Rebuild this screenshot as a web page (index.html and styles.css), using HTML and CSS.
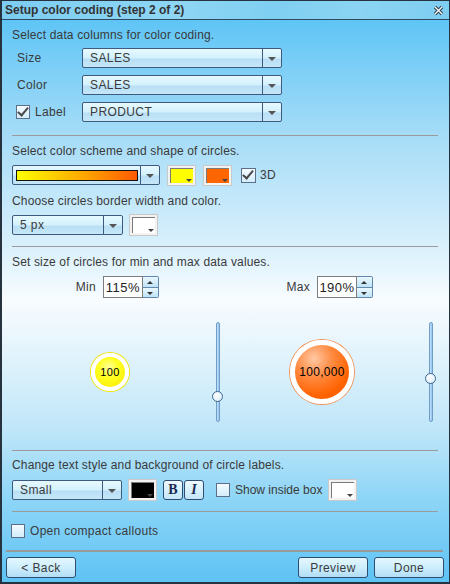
FILE: index.html
```html
<!DOCTYPE html>
<html lang="en">
<head>
    <meta charset="UTF-8">
    <title>Setup color coding</title>
    <link rel="stylesheet" href="styles.css">
</head>
<body>
    <div class="dialog">
        <div class="titlebar">
            <span class="title">Setup color coding (step 2 of 2)</span>
            <svg class="close" width="11" height="11" viewBox="0 0 11 11">
                <path d="M2 2 L9 9 M9 2 L2 9" stroke="#2a3a4a" stroke-width="3.2"/>
                <path d="M2 2 L9 9 M9 2 L2 9" stroke="#fff" stroke-width="1.4"/>
            </svg>
        </div>

        <div class="content">
            <!-- data columns -->
            <p class="caption first">Select data columns for color coding.</p>
            <div class="field-row">
                <span class="field-label">Size</span>
                <div class="combo w200"><span class="combo-text">SALES</span><span class="combo-arrow"></span></div>
            </div>
            <div class="field-row">
                <span class="field-label">Color</span>
                <div class="combo w200"><span class="combo-text">SALES</span><span class="combo-arrow"></span></div>
            </div>
            <div class="field-row">
                <span class="field-label check-label"><span class="check on"></span>Label</span>
                <div class="combo w200"><span class="combo-text">PRODUCT</span><span class="combo-arrow"></span></div>
            </div>
            <div class="sep s1"></div>

            <!-- scheme -->
            <p class="caption c2">Select color scheme and shape of circles.</p>
            <div class="tool-row r2">
                <div class="combo w148"><span class="combo-text"><span class="gradient-bar"></span></span><span class="combo-arrow"></span></div>
                <div class="swatch"><span class="swatch-fill yellow"></span></div>
                <div class="swatch"><span class="swatch-fill orange"></span></div>
                <span class="check-label three-d"><span class="check on"></span>3D</span>
            </div>
            <p class="caption c3">Choose circles border width and color.</p>
            <div class="tool-row r3">
                <div class="combo w111"><span class="combo-text">5 px</span><span class="combo-arrow"></span></div>
                <div class="swatch big"><span class="swatch-fill white"></span></div>
            </div>
            <div class="sep s2"></div>

            <!-- sizes -->
            <p class="caption c4">Set size of circles for min and max data values.</p>
            <div class="spin-row">
                <div class="spin-group g1">
                    <span>Min</span>
                    <div class="spinner"><span class="spin-value">115%</span><span class="spin-btns"><span class="up"></span><span class="down"></span></span></div>
                </div>
                <div class="spin-group g2">
                    <span>Max</span>
                    <div class="spinner"><span class="spin-value">190%</span><span class="spin-btns"><span class="up"></span><span class="down"></span></span></div>
                </div>
            </div>
            <div class="preview">
                <div class="bubble-cell left">
                    <div class="bubble small"><span>100</span></div>
                </div>
                <div class="slider"><span class="thumb" style="top: 68px"></span></div>
                <div class="bubble-cell right">
                    <div class="bubble large"><span>100,000</span></div>
                </div>
                <div class="slider last"><span class="thumb" style="top: 50px"></span></div>
            </div>
            <div class="sep s3"></div>

            <!-- labels -->
            <p class="caption c5">Change text style and background of circle labels.</p>
            <div class="tool-row r5">
                <div class="combo w110"><span class="combo-text">Small</span><span class="combo-arrow"></span></div>
                <div class="swatch big"><span class="swatch-fill black"></span></div>
                <div class="style-btns">
                    <span class="style-btn bold">B</span>
                    <span class="style-btn italic">I</span>
                </div>
                <span class="check-label inside"><span class="check"></span>Show inside box</span>
                <div class="swatch big"><span class="swatch-fill white"></span></div>
            </div>
            <div class="sep s4"></div>

            <span class="check-label callouts"><span class="check"></span>Open compact callouts</span>
            <div class="rule"></div>

            <div class="footer">
                <button class="btn back">&lt; Back</button>
                <button class="btn">Preview</button>
                <button class="btn">Done</button>
            </div>
        </div>
    </div>
</body>
</html>
```

FILE: styles.css
```css
body {
    margin: 0;
    font-family: "Liberation Sans", Arial, sans-serif;
    font-size: 12px;
    color: #3a3a3a;
}

p {
    margin: 0;
}

.dialog {
    width: 450px;
    height: 584px;
    box-sizing: border-box;
    border: 1px solid #26323e;
    border-left-width: 2px;
    border-bottom-width: 2px;
    display: flex;
    flex-direction: column;
}

.titlebar {
    height: 18px;
    border-bottom: 1px solid #2c4a62;
    background: linear-gradient(100deg, #7ccdf1 0%, #8ed6f4 40%, #7fcff2 60%, #8bd4f3 80%, #7dcdf1 100%);
    display: flex;
    align-items: center;
    padding: 0 5px 0 3px;
}

.title {
    font-weight: bold;
    color: #333;
    flex: 1;
}

.close {
    display: block;
}

.content {
    flex: 1;
    display: flex;
    flex-direction: column;
    padding: 0 10px;
    background: linear-gradient(to bottom, #5fc5f6 0px, #a3dbf7 110px, #dbf1fc 230px, #f8fcff 280px, #e4f4fc 330px, #bfe6f9 410px, #8dd5f7 480px, #5ec3f4 562px);
}

.caption {
    line-height: 14px;
    height: 14px;
    letter-spacing: 0.15px;
}

.caption.first { margin-top: 8px; margin-bottom: 6px; }
.caption.c2 { margin-top: 8px; }
.caption.c3 { margin-top: 9px; }
.caption.c4 { margin-top: 8px; }
.caption.c5 { margin-top: 7px; }

.field-row {
    display: flex;
    align-items: center;
    height: 20px;
    padding-left: 4px;
    margin-bottom: 7px;
}

.field-label {
    width: 66px;
    padding-left: 1px;
    box-sizing: border-box;
    letter-spacing: 0.3px;
}

.field-label.check-label {
    padding-left: 0;
}

.check-label {
    display: flex;
    align-items: center;
    gap: 5px;
    letter-spacing: 0.3px;
}

.check {
    width: 12px;
    height: 12px;
    border: 1px solid #5b6f88;
    background: linear-gradient(#f4fbff, #d3ecfa);
    position: relative;
    flex: none;
}

.check.on::after {
    content: "";
    position: absolute;
    left: 3px;
    top: -1px;
    width: 4px;
    height: 9px;
    border: solid #4a4a4a;
    border-width: 0 2px 2px 0;
    transform: rotate(40deg);
}

.combo {
    height: 20px;
    box-sizing: border-box;
    border: 1px solid #3e5a7e;
    border-radius: 2px;
    background: linear-gradient(#e6f9ff 0%, #d3f1fd 50%, #b9dff5 55%, #c5e7f8 100%);
    display: flex;
}

.w200 { width: 200px; }
.w148 { width: 148px; }
.w111 { width: 111px; }
.w110 { width: 110px; }

.combo-text {
    flex: 1;
    display: flex;
    align-items: center;
    padding-left: 7px;
    letter-spacing: 0.4px;
}

.combo-arrow {
    width: 18px;
    border-left: 1px solid #3e5a7e;
    position: relative;
}

.combo-arrow::after {
    content: "";
    position: absolute;
    left: 5px;
    top: 8px;
    border-left: 4px solid transparent;
    border-right: 4px solid transparent;
    border-top: 4px solid #555;
}

.gradient-bar {
    width: 120px;
    height: 9px;
    border: 1px solid #111;
    background: linear-gradient(to right, #ffff00, #ffa800 55%, #ff5a00);
    margin-left: -4px;
}

.tool-row {
    display: flex;
    align-items: center;
}

.tool-row.r2 { margin-top: 7px; gap: 7px; height: 20px; }
.tool-row.r3 { margin-top: 7px; gap: 6px; height: 20px; }
.tool-row.r5 { margin-top: 7px; height: 22px; }

.swatch {
    width: 29px;
    height: 21px;
    box-sizing: border-box;
    border: 1px solid #c9c9c9;
    background: #f2f2f2;
    padding: 2px;
    display: flex;
    position: relative;
}

.swatch.big {
    height: 22px;
}

.swatch::after {
    content: "";
    position: absolute;
    right: 3px;
    bottom: 3px;
    border-left: 3px solid transparent;
    border-right: 3px solid transparent;
    border-top: 3px solid #444;
}

.swatch-fill {
    flex: 1;
    border-top: 1px solid #7a7a7a;
    border-left: 1px solid #7a7a7a;
}

.swatch-fill.yellow { background: #ffff00; }
.swatch-fill.orange { background: #ff6600; }
.swatch-fill.white { background: #fff; }
.swatch-fill.black { background: #000; }

.three-d {
    margin-left: 2px;
    gap: 4px;
}

.three-d .check {
    width: 13px;
    height: 13px;
}

.sep {
    height: 1px;
    background: #9b9b9b;
    margin-right: 1px;
}

.sep.s1 { margin-top: 6px; }
.sep.s2 { margin-top: 11px; }
.sep.s3 { margin-top: 4px; }
.sep.s4 { margin-top: 10px; }

.spin-row {
    display: flex;
    margin-top: 7px;
    height: 22px;
}

.spin-group {
    display: flex;
    align-items: center;
    justify-content: flex-end;
    gap: 7px;
    letter-spacing: 0.3px;
}

.spin-group.g1 { width: 147px; }
.spin-group.g2 { width: 214px; }

.spinner {
    display: flex;
    height: 22px;
}

.spin-value {
    width: 40px;
    box-sizing: border-box;
    border: 1px solid #7d7d7d;
    background: #fff;
    color: #222;
    font-size: 13px;
    display: flex;
    align-items: center;
    justify-content: center;
    letter-spacing: 0.5px;
}

.spin-btns {
    width: 16px;
    display: flex;
    flex-direction: column;
    border: 1px solid #6388ad;
    border-left: none;
    box-sizing: border-box;
    border-radius: 0 2px 2px 0;
}

.spin-btns span {
    flex: 1;
    position: relative;
    background: linear-gradient(#eaf8ff, #bfe3f7);
}

.spin-btns .up {
    border-bottom: 1px solid #6388ad;
}

.spin-btns span::after {
    content: "";
    position: absolute;
    left: 4px;
    top: 4px;
    border-left: 3px solid transparent;
    border-right: 3px solid transparent;
}

.spin-btns .up::after {
    border-bottom: 3px solid #333;
}

.spin-btns .down::after {
    border-top: 3px solid #333;
}

.preview {
    height: 148px;
    display: flex;
    align-items: center;
}

.bubble-cell {
    display: flex;
    justify-content: center;
}

.bubble-cell.left { width: 196px; }
.bubble-cell.right { width: 204px; }

.bubble {
    border-radius: 50%;
    display: flex;
    align-items: center;
    justify-content: center;
    color: #000;
    font-size: 11px;
    letter-spacing: 0.3px;
    box-sizing: border-box;
}

.bubble.small {
    width: 38px;
    height: 38px;
    border: 4px solid #fff;
    box-shadow: 0 0 0 1px #f2e600;
    background: radial-gradient(circle at 45% 35%, #ffff9a 0%, #ffff20 40%, #f9e800 100%);
}

.bubble.large {
    width: 64px;
    height: 64px;
    border: 5px solid #fff;
    box-shadow: 0 0 0 1px #f59050;
    background: radial-gradient(circle at 35% 25%, #ffc8a4 0%, #ff8a40 35%, #ff6200 70%, #f65a00 100%);
    font-size: 12px;
}

.slider {
    width: 4px;
    height: 100px;
    box-sizing: border-box;
    border: 1px solid #6e9dc8;
    border-radius: 2px;
    background: linear-gradient(to right, #c6e2fb, #93c3ee);
    margin-left: 8px;
    position: relative;
}

.slider.last {
    margin-left: 5px;
}

.thumb {
    position: absolute;
    left: -5px;
    width: 11px;
    height: 11px;
    box-sizing: border-box;
    border-radius: 50%;
    border: 1px solid #3d6a92;
    background: radial-gradient(circle at 40% 35%, #ffffff, #d6ecf9);
}

.r5 .swatch {
    margin-left: 6px;
}

.style-btns {
    display: flex;
    gap: 1px;
    margin-left: 6px;
}

.style-btn {
    width: 20px;
    height: 20px;
    box-sizing: border-box;
    border: 1px solid #2f4b70;
    border-radius: 3px;
    background: linear-gradient(#eefaff, #c3e6f8);
    display: flex;
    align-items: center;
    justify-content: center;
    font-family: "Liberation Serif", "Times New Roman", serif;
    font-weight: bold;
    font-size: 14px;
    color: #1c2850;
}

.style-btn.italic {
    font-style: italic;
}

.check-label.inside {
    margin-left: 12px;
    gap: 5px;
    letter-spacing: 0;
}

.r5 .check-label.inside + .swatch {
    margin-left: 6px;
}

.callouts {
    margin-top: 12px;
    margin-left: -1px;
    height: 14px;
}

.rule {
    height: 2px;
    background: #999;
    margin: 12px -4px 0 -6px;
}

.footer {
    display: flex;
    gap: 6px;
    margin: 5px -5px 0 -6px;
}

.btn {
    width: 70px;
    height: 21px;
    border: 1px solid #2d4d72;
    border-radius: 3px;
    background: linear-gradient(#e4f7ff 0%, #cdeefc 50%, #b2ddf5 100%);
    font-family: "Liberation Sans", Arial, sans-serif;
    font-size: 12px;
    color: #3a3a3a;
    letter-spacing: 0.4px;
    padding: 0;
}

.btn.back {
    margin-right: auto;
}
```
